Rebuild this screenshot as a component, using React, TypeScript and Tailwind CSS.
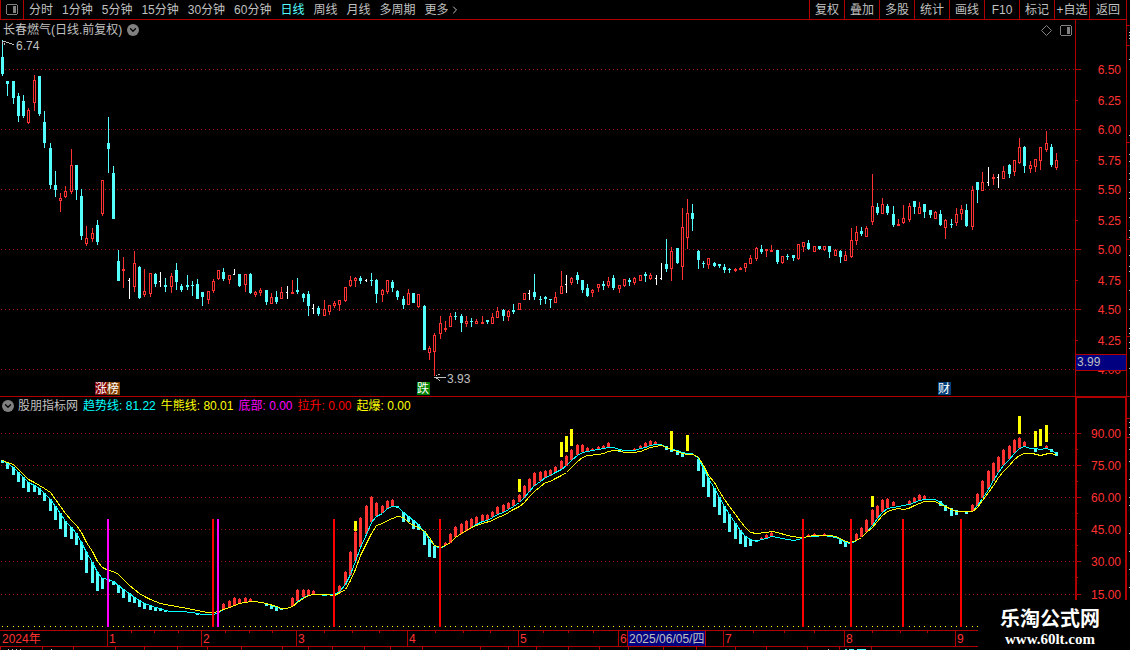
import React, { useState } from 'react';
import { ChevronDown, ChevronRight } from 'lucide-react';

type Kind = 'u' | 'd' | 'w';
// x, high, body top, body bottom, low, kind (up / down / flat)
type Candle = [number, number, number, number, number, Kind];
type Bar = [number, number, number];

const candles: Candle[] = [
  [2, 40, 57, 74, 76, 'd'], [7, 81, 81, 84, 96, 'd'], [13, 81, 81, 98, 104, 'd'], [18, 93, 96, 116, 122, 'd'],
  [23, 95, 101, 116, 118, 'd'], [28, 108, 110, 123, 124, 'u'], [34, 75, 80, 103, 111, 'u'], [39, 76, 76, 114, 116, 'd'],
  [44, 111, 122, 143, 148, 'd'], [50, 143, 148, 185, 189, 'd'], [55, 171, 185, 190, 197, 'd'], [60, 193, 198, 201, 212, 'u'],
  [65, 186, 191, 197, 198, 'u'], [71, 149, 165, 192, 194, 'u'], [76, 165, 165, 190, 200, 'd'], [81, 189, 196, 236, 240, 'd'],
  [86, 226, 238, 244, 246, 'u'], [92, 228, 233, 239, 242, 'u'], [97, 220, 225, 242, 245, 'd'], [102, 180, 180, 214, 216, 'u'],
  [108, 117, 143, 149, 173, 'd'], [113, 166, 173, 219, 219, 'd'], [118, 250, 261, 281, 281, 'd'], [123, 257, 269, 271, 288, 'u'],
  [129, 278, 280, 281, 299, 'w'], [134, 251, 263, 287, 292, 'u'], [139, 266, 267, 298, 299, 'd'], [144, 269, 291, 295, 297, 'u'],
  [150, 273, 273, 294, 297, 'u'], [155, 273, 274, 284, 287, 'd'], [160, 272, 281, 282, 287, 'w'], [165, 278, 285, 287, 292, 'd'],
  [171, 273, 276, 287, 293, 'u'], [176, 263, 270, 282, 290, 'd'], [181, 284, 286, 290, 292, 'd'], [187, 275, 285, 287, 290, 'd'],
  [192, 281, 285, 286, 296, 'd'], [197, 279, 284, 299, 299, 'd'], [202, 292, 292, 297, 306, 'd'], [208, 291, 291, 300, 304, 'u'],
  [213, 279, 281, 291, 293, 'u'], [218, 270, 270, 279, 280, 'u'], [223, 268, 272, 279, 281, 'd'], [229, 275, 275, 280, 284, 'u'],
  [234, 269, 274, 275, 275, 'w'], [239, 274, 274, 286, 287, 'd'], [245, 274, 274, 285, 292, 'u'], [250, 273, 274, 293, 294, 'd'],
  [255, 291, 292, 295, 297, 'u'], [260, 288, 290, 293, 296, 'u'], [266, 290, 290, 302, 305, 'd'], [271, 293, 297, 304, 304, 'u'],
  [276, 291, 297, 302, 304, 'd'], [281, 287, 292, 299, 299, 'u'], [287, 286, 292, 293, 299, 'w'], [292, 280, 292, 294, 294, 'u'],
  [297, 278, 290, 292, 294, 'd'], [303, 293, 294, 298, 302, 'd'], [308, 291, 294, 306, 316, 'd'], [313, 304, 308, 309, 314, 'w'],
  [318, 306, 308, 314, 316, 'd'], [324, 300, 309, 316, 316, 'u'], [329, 305, 305, 312, 315, 'u'], [334, 301, 303, 306, 308, 'u'],
  [339, 300, 300, 305, 311, 'u'], [345, 287, 287, 301, 302, 'u'], [350, 276, 280, 286, 287, 'u'], [355, 277, 278, 281, 287, 'u'],
  [360, 276, 278, 281, 284, 'd'], [366, 279, 280, 281, 282, 'w'], [371, 273, 280, 281, 286, 'd'], [376, 279, 280, 294, 303, 'd'],
  [382, 289, 290, 295, 302, 'u'], [387, 280, 280, 292, 294, 'u'], [392, 280, 282, 288, 292, 'd'], [397, 290, 291, 297, 300, 'd'],
  [403, 296, 299, 305, 309, 'd'], [408, 289, 293, 305, 305, 'u'], [413, 293, 293, 303, 303, 'd'], [418, 294, 294, 307, 308, 'u'],
  [424, 305, 306, 350, 350, 'd'], [429, 346, 348, 353, 360, 'u'], [434, 333, 335, 352, 376, 'u'], [440, 316, 323, 334, 339, 'u'],
  [445, 321, 328, 330, 332, 'u'], [450, 313, 316, 327, 327, 'u'], [455, 312, 316, 317, 320, 'd'], [461, 314, 316, 323, 332, 'd'],
  [466, 316, 321, 324, 327, 'u'], [471, 318, 321, 322, 327, 'd'], [476, 319, 321, 324, 324, 'u'], [482, 316, 322, 324, 324, 'u'],
  [487, 320, 320, 322, 324, 'd'], [492, 313, 317, 324, 324, 'u'], [497, 307, 311, 318, 318, 'u'], [503, 309, 310, 316, 321, 'd'],
  [508, 310, 311, 317, 321, 'u'], [513, 304, 310, 312, 314, 'd'], [519, 303, 303, 310, 310, 'u'], [524, 293, 293, 300, 300, 'u'],
  [529, 290, 293, 294, 300, 'w'], [534, 274, 292, 297, 300, 'd'], [540, 296, 299, 300, 305, 'd'], [545, 296, 297, 299, 304, 'd'],
  [550, 299, 299, 300, 308, 'd'], [555, 292, 297, 303, 303, 'u'], [561, 271, 286, 294, 294, 'u'], [566, 275, 284, 285, 293, 'w'],
  [571, 277, 278, 283, 285, 'u'], [577, 272, 275, 280, 284, 'd'], [582, 280, 280, 290, 293, 'd'], [587, 284, 288, 296, 297, 'd'],
  [592, 289, 290, 293, 297, 'u'], [598, 284, 284, 288, 292, 'u'], [603, 281, 284, 286, 290, 'd'], [608, 277, 281, 286, 288, 'u'],
  [613, 275, 278, 288, 290, 'd'], [619, 285, 285, 289, 293, 'u'], [624, 279, 279, 286, 287, 'u'], [629, 278, 280, 282, 286, 'd'],
  [634, 277, 278, 283, 285, 'u'], [640, 275, 275, 281, 281, 'u'], [645, 272, 274, 276, 282, 'd'], [650, 273, 275, 279, 280, 'u'],
  [656, 275, 278, 279, 285, 'w'], [661, 263, 278, 279, 280, 'w'], [666, 239, 264, 269, 272, 'd'], [671, 247, 251, 269, 281, 'u'],
  [677, 248, 248, 263, 264, 'd'], [682, 208, 227, 267, 280, 'u'], [687, 199, 213, 238, 249, 'u'], [692, 204, 213, 219, 231, 'd'],
  [698, 250, 251, 260, 269, 'd'], [703, 261, 263, 264, 268, 'd'], [708, 258, 258, 265, 269, 'u'], [714, 262, 263, 266, 267, 'd'],
  [719, 264, 264, 266, 268, 'd'], [724, 264, 267, 270, 273, 'd'], [729, 268, 269, 270, 273, 'd'], [735, 268, 269, 271, 272, 'u'],
  [740, 267, 268, 270, 270, 'u'], [745, 263, 263, 268, 272, 'u'], [750, 255, 258, 264, 264, 'u'], [756, 247, 248, 259, 261, 'u'],
  [761, 245, 249, 252, 254, 'd'], [766, 249, 249, 251, 257, 'u'], [771, 245, 250, 252, 252, 'u'], [777, 250, 250, 262, 264, 'd'],
  [782, 256, 256, 263, 264, 'u'], [787, 254, 256, 257, 260, 'd'], [793, 255, 255, 258, 261, 'd'], [798, 244, 244, 259, 260, 'u'],
  [803, 242, 242, 247, 252, 'u'], [808, 240, 243, 249, 250, 'd'], [814, 246, 246, 252, 252, 'u'], [819, 246, 246, 249, 250, 'd'],
  [824, 246, 246, 250, 251, 'u'], [829, 246, 246, 252, 258, 'd'], [835, 249, 250, 256, 256, 'u'], [840, 250, 251, 257, 263, 'd'],
  [845, 251, 255, 261, 261, 'u'], [851, 228, 240, 257, 258, 'u'], [856, 226, 232, 241, 245, 'u'], [861, 227, 231, 234, 236, 'd'],
  [866, 226, 228, 237, 237, 'u'], [872, 174, 206, 222, 225, 'u'], [877, 203, 207, 213, 215, 'd'], [882, 198, 204, 214, 214, 'u'],
  [887, 204, 206, 213, 215, 'd'], [893, 206, 214, 225, 227, 'd'], [898, 219, 224, 226, 226, 'u'], [903, 205, 218, 223, 224, 'u'],
  [909, 203, 206, 220, 222, 'u'], [914, 201, 201, 207, 214, 'd'], [919, 202, 207, 214, 214, 'u'], [924, 204, 204, 212, 218, 'd'],
  [930, 210, 210, 215, 218, 'd'], [935, 211, 212, 219, 219, 'u'], [940, 210, 214, 225, 226, 'd'], [945, 219, 220, 228, 239, 'u'],
  [951, 219, 224, 225, 228, 'd'], [956, 208, 214, 223, 226, 'u'], [961, 205, 209, 214, 220, 'u'], [966, 204, 210, 226, 227, 'd'],
  [972, 186, 190, 227, 230, 'u'], [977, 182, 182, 190, 203, 'd'], [982, 172, 182, 191, 191, 'u'], [988, 167, 182, 183, 186, 'w'],
  [993, 174, 177, 179, 185, 'u'], [998, 174, 177, 178, 188, 'w'], [1003, 166, 171, 179, 179, 'u'], [1009, 164, 165, 174, 178, 'd'],
  [1014, 160, 160, 172, 176, 'u'], [1019, 138, 147, 163, 164, 'u'], [1024, 146, 147, 166, 173, 'd'], [1030, 161, 165, 169, 173, 'u'],
  [1035, 159, 159, 167, 172, 'u'], [1040, 147, 147, 161, 170, 'u'], [1046, 131, 143, 150, 152, 'u'], [1051, 144, 147, 165, 167, 'd'],
  [1056, 153, 160, 168, 170, 'u'],
];

const downBars: Bar[] = [
  [2, 460, 463], [7, 463, 469], [13, 467, 475], [18, 472, 482], [23, 477, 488], [28, 482, 492], [34, 485, 492], [39, 488, 495],
  [44, 493, 501], [50, 499, 511], [55, 506, 520], [60, 513, 529], [65, 521, 537], [71, 527, 539], [76, 533, 545], [81, 542, 560],
  [86, 552, 573], [92, 562, 583], [97, 572, 591], [102, 578, 589], [108, 579, 582], [113, 581, 585], [118, 585, 593], [123, 589, 598],
  [129, 593, 602], [134, 597, 603], [139, 600, 607], [144, 603, 609], [150, 605, 610], [155, 607, 611], [160, 608, 611], [165, 610, 612],
  [197, 613, 615], [266, 603, 606], [271, 605, 609], [276, 606, 611], [281, 608, 610], [397, 506, 508], [403, 512, 522], [408, 516, 522],
  [413, 520, 529], [418, 524, 530], [424, 531, 545], [429, 539, 557], [434, 546, 558], [619, 449, 452], [666, 446, 450], [671, 448, 452],
  [677, 450, 455], [682, 452, 457], [698, 459, 471], [703, 468, 487], [708, 478, 497], [714, 488, 507], [719, 497, 515], [724, 506, 523],
  [729, 514, 532], [735, 523, 539], [740, 530, 544], [745, 536, 547], [750, 539, 546], [756, 540, 542], [840, 539, 544], [845, 542, 547],
  [940, 501, 506], [945, 505, 511], [951, 508, 516], [956, 510, 515], [966, 512, 514], [1035, 448, 452], [1051, 449, 452], [1056, 452, 456],
];

const upBars: Bar[] = [
  [218, 610, 613], [223, 603, 610], [229, 600, 608], [234, 597, 606], [239, 598, 604], [245, 597, 603], [250, 598, 602], [292, 597, 606],
  [297, 589, 601], [303, 589, 597], [308, 589, 595], [313, 590, 594], [339, 585, 592], [345, 571, 585], [350, 551, 575], [355, 531, 561],
  [360, 517, 547], [366, 505, 534], [371, 496, 522], [376, 502, 516], [382, 505, 513], [387, 500, 509], [392, 499, 506], [445, 542, 545],
  [450, 533, 543], [455, 526, 537], [461, 523, 534], [466, 520, 531], [471, 518, 528], [476, 516, 525], [482, 514, 521], [487, 514, 520],
  [492, 511, 517], [497, 506, 514], [503, 504, 512], [508, 502, 509], [513, 499, 506], [519, 494, 502], [524, 485, 498], [529, 478, 492],
  [534, 472, 486], [540, 471, 481], [545, 470, 478], [550, 469, 476], [555, 466, 473], [561, 460, 469], [566, 455, 466], [571, 449, 460],
  [577, 444, 455], [582, 444, 452], [587, 447, 451], [592, 448, 450], [598, 446, 449], [603, 445, 448], [608, 442, 447], [634, 448, 450],
  [640, 445, 448], [645, 442, 447], [650, 440, 446], [655, 441, 444], [761, 537, 539], [766, 534, 538], [771, 532, 536], [808, 534, 536],
  [814, 533, 535], [824, 533, 535], [856, 533, 540], [861, 527, 537], [866, 519, 532], [872, 509, 525], [877, 505, 518], [882, 499, 512],
  [887, 498, 508], [893, 501, 506], [909, 500, 504], [914, 497, 502], [919, 494, 500], [924, 495, 499], [972, 504, 511], [977, 493, 506],
  [982, 480, 498], [988, 470, 489], [993, 462, 481], [998, 456, 472], [1003, 449, 465], [1009, 445, 459], [1014, 439, 453],
  [1019, 437, 448], [1024, 441, 446], [1046, 445, 448],
];

const burstBars: Bar[] = [
  [355, 521, 531], [519, 479, 492], [561, 442, 457], [566, 436, 452], [571, 429, 446], [671, 431, 449], [687, 435, 451],
  [872, 496, 507], [1019, 416, 434], [1035, 431, 447], [1040, 429, 446], [1046, 425, 442],
];

const trendLine =
  '2,460 7,463 13,467 18,472 23,477 28,482 34,485 39,488 44,493 50,499 55,506 60,513 65,521 71,527 76,533 81,542 86,552 92,562 97,572 102,578 108,579 113,581 118,585 123,589 129,593 134,597 139,600 144,603 150,605 155,607 160,608 165,610 170,611 181,611 192,612 197,613 202,614 213,614 218,612 223,609 229,607 234,605 239,603 245,602 250,601 255,601 260,602 266,603 271,605 276,607 281,608 286,608 292,606 297,601 303,597 308,595 313,594 318,594 324,595 329,594 334,594 339,591 345,584 350,574 355,561 360,547 366,534 371,522 376,516 382,513 387,508 392,506 397,506 403,512 408,516 413,520 418,524 424,532 429,539 434,545 440,548 445,545 450,542 455,537 461,533 466,530 471,527 476,524 482,521 487,520 492,517 497,514 503,512 508,509 513,506 519,502 524,497 529,491 534,485 540,481 545,477 550,475 555,472 561,469 566,465 571,460 577,455 582,452 587,451 592,450 598,449 603,448 608,447 613,447 619,449 624,450 634,450 640,448 645,447 650,445 655,444 661,444 666,447 671,449 677,450 682,452 687,453 692,453 698,458 703,468 708,478 714,488 719,497 724,506 729,514 735,523 740,530 745,536 750,539 756,541 761,539 766,538 771,536 777,537 782,538 793,540 798,539 803,537 808,536 814,536 824,535 829,536 835,537 840,539 845,542 850,543 856,540 861,537 866,532 872,525 877,518 882,512 887,508 893,507 903,505 909,504 914,502 919,500 924,499 935,499 940,502 945,506 951,509 956,511 972,511 977,505 982,498 988,489 993,480 998,472 1003,465 1009,459 1014,453 1019,448 1024,446 1030,448 1035,448 1040,449 1046,448 1051,450 1056,453';

const bullBearLine =
  '2,460 7,462 13,464 18,469 23,474 28,479 34,482 39,485 44,488 50,492 55,499 60,506 65,513 71,520 76,525 81,532 86,542 92,551 97,561 102,567 108,570 113,571 118,574 123,579 129,585 134,589 139,593 144,596 150,599 155,601 160,603 165,604 176,606 187,608 197,610 207,612 213,612 218,611 223,609 229,607 234,605 239,603 245,602 250,601 255,601 266,603 276,606 281,608 286,608 292,606 297,602 303,598 308,595 313,594 324,594 334,595 340,592 345,589 350,580 355,569 360,555 366,543 371,533 376,525 382,523 387,520 392,518 397,516 403,517 408,522 413,525 418,527 424,531 429,537 434,545 440,547 445,545 450,542 455,537 461,533 466,530 471,527 476,525 482,523 492,520 497,517 503,515 508,512 513,509 519,506 524,502 529,496 534,491 540,486 545,482 550,481 555,478 561,475 566,472 571,467 577,461 582,457 587,455 598,454 603,453 608,451 613,450 619,450 624,452 634,452 640,451 645,449 650,447 655,446 661,445 666,447 671,449 677,451 682,453 687,454 693,454 698,457 703,465 708,475 714,482 719,491 724,499 729,506 735,514 740,521 745,527 750,532 756,533 766,532 771,531 777,532 787,535 798,537 803,537 808,536 814,535 829,535 835,536 840,538 845,541 850,542 856,540 861,537 866,532 872,527 877,521 882,515 887,511 893,509 898,508 903,509 908,508 914,505 919,503 924,501 935,501 940,504 945,506 951,509 956,511 972,511 977,507 982,500 988,492 993,485 998,477 1003,471 1009,465 1014,459 1019,455 1024,453 1032,453 1040,455 1048,453 1056,454';

const signals: [number, string][] = [
  [107, '#ff00ff'], [212, '#ff0000'], [217, '#ff00ff'], [333, '#ff0000'], [439, '#ff0000'],
  [802, '#ff0000'], [850, '#ff0000'], [902, '#ff0000'], [960, '#ff0000'],
];

const priceTicks: [number, string][] = [
  [69, '6.50'], [100, '6.25'], [129, '6.00'], [160, '5.75'], [189, '5.50'], [220, '5.25'],
  [249, '5.00'], [280, '4.75'], [309, '4.50'], [340, '4.25'], [369, '4.00'],
];
const indicatorTicks: [number, string][] = [
  [433, '90.00'], [465, '75.00'], [497, '60.00'], [529, '45.00'], [561, '30.00'], [594, '15.00'],
];

const months: [number, string][] = [
  [107, '1'], [201, '2'], [296, '3'], [407, '4'], [518, '5'], [618, '6'], [723, '7'], [844, '8'], [955, '9'],
];
const weekTicks = [131, 154, 178, 225, 249, 272, 324, 352, 379, 435, 463, 490, 543, 568, 593, 753, 784, 814, 872, 900, 927];
const footerTicks = [0, 42, 73, 115, 144, 177, 207, 241, 282, 308, 332, 364, 390, 422, 480, 508, 536, 568, 599, 628, 663, 696, 735, 766, 807, 839, 871];
const sideLines = [25, 45, 142, 239, 336, 396, 418, 437];
const sideDots = [32, 35, 38, 59, 135, 154, 161, 173, 179, 192, 198, 217, 230, 237, 255, 266, 271, 290, 309, 328, 333, 342, 348, 368, 422, 427, 434, 449, 461, 479, 497, 505, 533, 551, 569, 587];

const periods = ['分时', '1分钟', '5分钟', '15分钟', '30分钟', '60分钟', '日线', '周线', '月线', '多周期'];
const tools = ['复权', '叠加', '多股', '统计', '画线', 'F10', '标记', '+自选', '返回'];

const readings = [
  { label: '趋势线', value: '81.22', color: 'text-[#00ffff]' },
  { label: '牛熊线', value: '80.01', color: 'text-[#ffff00]' },
  { label: '底部', value: '0.00', color: 'text-[#ff00ff]' },
  { label: '拉升', value: '0.00', color: 'text-[#ff0000]' },
  { label: '起爆', value: '0.00', color: 'text-[#ffff00]' },
];

const PanelIcon = () => (
  <svg width="12" height="11" viewBox="0 0 12 11" shapeRendering="crispEdges">
    <path d="M1 0h10v1h1v9h-1v1H1v-1H0V1h1z M1 1v9h10V1z" fill="#808080" fillRule="evenodd" />
    <rect x="7" y="2" width="3" height="7" fill="#808080" />
  </svg>
);

const CollapseButton = ({ label }: { label: string }) => (
  <button aria-label={label} className="flex h-3 w-3 shrink-0 items-center justify-center rounded-full bg-[#808080] text-black">
    <ChevronDown size={10} strokeWidth={3} />
  </button>
);

const GridLines = ({ ticks }: { ticks: number[] }) => (
  <g stroke="#9c1414" strokeDasharray="1 3">
    {ticks.map((y) => (
      <line key={y} x1="1" x2="100%" y1={y + 0.5} y2={y + 0.5} />
    ))}
  </g>
);

const CandleMark = ({ candle }: { candle: Candle }) => {
  const [x, high, top, bottom, low, kind] = candle;
  if (kind === 'w') {
    return (
      <g fill="#ffffff">
        <rect x={x} y={high} width="1" height={low - high} />
        <rect x={x - 1} y={top} width="1" height="1" />
      </g>
    );
  }
  return (
    <g fill={kind === 'u' ? '#ff3232' : '#54ffff'}>
      <rect x={x} y={high} width="1" height={low - high} />
      <rect x={x - 1} y={top} width="3" height={bottom - top} />
      {kind === 'u' && bottom - top > 2 && (
        <rect x={x} y={top + 1} width="1" height={bottom - top - 2} fill="#000000" />
      )}
    </g>
  );
};

const Badge = ({ x, text, fill }: { x: number; text: string; fill: string }) => (
  <g>
    <rect x={x} y="382" width="13" height="13" fill={fill} />
    <text x={x + 6} y="393" textAnchor="middle" fill="#ffffff">{text}</text>
  </g>
);

const PriceChart = () => (
  <svg className="block h-[356px] w-full text-xs" shapeRendering="crispEdges" role="img" aria-label="日线K线图">
    <g transform="translate(0,-40)">
      <GridLines ticks={[69, 129, 189, 249, 309, 369]} />
      {candles.map((c) => (
        <CandleMark key={c[0]} candle={c} />
      ))}
      <g fill="none" stroke="#c0c0c0">
        <path d="M3 41.5h3M6 42.5h3M9 43.5h3M12 44.5h2M2.5 41v3M4.5 43v2" />
        <path d="M434 377.5h12M436.5 376v-1M438 374.5h2M436 378.5h2M438 379.5h1M439 380.5h1" />
      </g>
      <g fill="#c0c0c0">
        <text x="16" y="50">6.74</text>
        <text x="447" y="383">3.93</text>
      </g>
      <Badge x={95} text="涨" fill="#800000" />
      <Badge x={107} text="榜" fill="#804000" />
      <Badge x={417} text="跌" fill="#008000" />
      <Badge x={938} text="财" fill="#003c78" />
    </g>
  </svg>
);

const IndicatorChart = () => (
  <svg className="block h-[216px] w-full" shapeRendering="crispEdges" role="img" aria-label="趋势指标图">
    <g transform="translate(0,-414)">
      <GridLines ticks={indicatorTicks.map(([y]) => y)} />
      {candles.map(([x]) => (
        <rect key={x} x={x} y="626" width="1" height="1" fill="#ffff00" />
      ))}
      {downBars.map(([x, top, bottom]) => (
        <rect key={x} x={x - 1} y={top} width="3" height={bottom - top} fill="#54ffff" />
      ))}
      {upBars.map(([x, top, bottom]) => (
        <g key={x} fill="#ff3232">
          <rect x={x} y={top} width="1" height="1" />
          <rect x={x - 1} y={top + 1} width="3" height={bottom - top - 1} />
        </g>
      ))}
      <g fill="none" transform="translate(0.5,0.5)">
        <polyline points={trendLine} stroke="#00ffff" />
        <polyline points={bullBearLine} stroke="#ffff00" />
      </g>
      {burstBars.map(([x, top, bottom]) => (
        <rect key={x} x={x - 1} y={top} width="3" height={bottom - top} fill="#ffff00" />
      ))}
      {signals.map(([x, color]) => (
        <rect key={x} x={x} y="519" width="2" height="108" fill={color} />
      ))}
    </g>
  </svg>
);

const PriceAxis = () => (
  <svg className="block h-[376px] w-[51px] shrink-0 border-l border-[#b00000] text-xs" shapeRendering="crispEdges">
    <g transform="translate(0,-20)">
      {priceTicks.map(([y, label], i) => (
        <g key={label}>
          <rect x="0" y={y} width={i % 2 === 0 ? 5 : 2} height="1" fill="#b00000" />
          <text x="45" y={y + 5} textAnchor="end" fill="#ff3232">{label}</text>
        </g>
      ))}
      <rect x="0" y="354" width="50" height="17" fill="#b00000" />
      <rect x="0" y="355" width="50" height="15" fill="#000080" />
      <text x="1" y="366" fill="#c0c0c0">3.99</text>
    </g>
  </svg>
);

const IndicatorAxis = () => (
  <svg className="block h-[233px] w-[51px] shrink-0 border-t border-r border-l-2 border-[#b00000] text-xs" shapeRendering="crispEdges">
    <g transform="translate(0,-398)">
      {indicatorTicks.map(([y, label]) => (
        <g key={label}>
          <rect x="0" y={y} width="4" height="1" fill="#b00000" />
          <rect x="0" y={y + 16} width="1" height="1" fill="#b00000" />
          <text x="44" y={y + 5} textAnchor="end" fill="#ff3232">{label}</text>
        </g>
      ))}
    </g>
  </svg>
);

const TimeAxis = () => (
  <svg className="block h-[20px] w-full text-xs" shapeRendering="crispEdges">
    <g transform="translate(0,-630)">
      <rect x="0" y="630" width="100%" height="1" fill="#b00000" />
      <rect x="0" y="646" width="100%" height="1" fill="#b00000" />
      {weekTicks.map((x) => (
        <rect key={x} x={x} y="631" width="1" height="2" fill="#b00000" />
      ))}
      {footerTicks.map((x) => (
        <rect key={x} x={x} y="647" width="1" height="3" fill="#b00000" />
      ))}
      <text x="2" y="643" fill="#ff3232">2024年</text>
      {months.map(([x, label]) => (
        <g key={x}>
          <rect x={x} y="631" width="1" height="15" fill="#b00000" />
          <text x={x + 2} y="643" fill="#ff3232">{label}</text>
        </g>
      ))}
      <rect x="627" y="631" width="79" height="15" fill="#b00000" />
      <rect x="628" y="631" width="77" height="15" fill="#000080" />
      <text x="629" y="643" fill="#c0c0c0">2025/06/05/四</text>
      <path d="M8 649.5h1M12 649.5h1M16 649.5h1M20 649.5h1M51 649.5h1M828 649.5h1" stroke="#c0c0c0" />
      <path d="M845 649.5h2M849 649.5h5M857 649.5h9" stroke="#54ffff" />
    </g>
  </svg>
);

const SideStrip = () => (
  <svg className="block w-1 shrink-0 self-stretch border-l border-[#b00000]" shapeRendering="crispEdges">
    {sideLines.map((y) => (
      <rect key={y} x="0" y={y} width="3" height="1" fill="#b00000" />
    ))}
    {sideDots.map((y) => (
      <rect key={y} x="2" y={y} width="1" height="1" fill="#c0c0c0" />
    ))}
  </svg>
);

export default function App() {
  const [period, setPeriod] = useState('日线');

  return (
    <div className="relative flex min-h-screen overflow-hidden bg-black font-['Liberation_Sans','Noto_Sans_CJK_SC',sans-serif] text-xs text-[#c0c0c0]">
      <div className="flex min-w-0 flex-1 flex-col">
        {/* Period toolbar */}
        <header className="flex h-5 justify-between border-b border-[#b00000] whitespace-nowrap">
          <nav className="flex items-center gap-[9px]">
            <button aria-label="侧栏" className="-mr-1 flex h-full w-6 items-center justify-center border-x border-[#b00000]">
              <PanelIcon />
            </button>
            {periods.map((p) => (
              <button key={p} onClick={() => setPeriod(p)} className={p === period ? 'text-[#54ffff]' : ''}>
                {p}
              </button>
            ))}
            <button className="flex items-center">
              更多
              <ChevronRight size={12} strokeWidth={2} />
            </button>
          </nav>
          <div className="flex">
            {tools.map((t) => (
              <button key={t} className="w-[35px] border-l border-[#b00000] text-center last:w-[37px]">
                {t}
              </button>
            ))}
          </div>
        </header>

        {/* Price panel */}
        <section className="flex">
          <div className="min-w-0 flex-1">
            <div className="flex h-5 items-center justify-between pr-[3px] pl-[3px]">
              <h1 className="flex items-center gap-[5px]">
                长春燃气(日线.前复权)
                <CollapseButton label="展开主图菜单" />
              </h1>
              <div className="flex items-center gap-2">
                <svg width="11" height="11" viewBox="0 0 11 11">
                  <path d="M5.5 0.5l5 5l-5 5l-5-5z" fill="none" stroke="#808080" />
                </svg>
                <button aria-label="布局">
                  <PanelIcon />
                </button>
              </div>
            </div>
            <PriceChart />
          </div>
          <PriceAxis />
        </section>

        {/* Indicator panel */}
        <section className="flex border-t border-[#b00000]">
          <div className="min-w-0 flex-1">
            <div className="flex h-[17px] items-center gap-[5px] pl-0.5 whitespace-nowrap">
              <CollapseButton label="展开指标菜单" />
              <h2 className="-ml-px">股朋指标网</h2>
              {readings.map((r) => (
                <span key={r.label} className={r.color}>
                  {r.label}: {r.value}
                </span>
              ))}
            </div>
            <IndicatorChart />
          </div>
          <IndicatorAxis />
        </section>

        <TimeAxis />
      </div>
      <SideStrip />

      {/* Site mark over the corner */}
      <div className="absolute right-0 bottom-0 flex h-[50px] w-[152px] flex-col items-center bg-black pt-2 pr-2 text-white">
        <span className="text-xl leading-[22px] font-bold">乐淘公式网</span>
        <a href="#" className="font-['Liberation_Serif',serif] text-[15px] leading-[18px] font-bold">www.60lt.com</a>
      </div>
    </div>
  );
}
